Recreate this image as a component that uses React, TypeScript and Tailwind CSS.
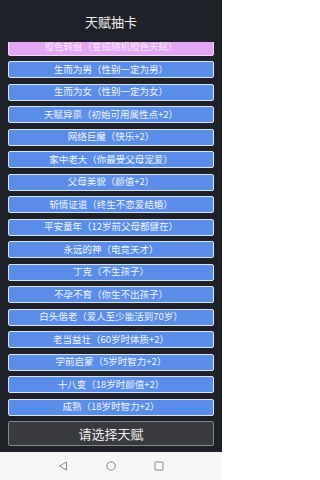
import React from "react";

const items = [
  "生而为男（性别一定为男）",
  "生而为女（性别一定为女）",
  "天赋异禀（初始可用属性点+2）",
  "网络巨魔（快乐+2）",
  "家中老大（你最受父母宠爱）",
  "父母美貌（颜值+2）",
  "斩情证道（终生不恋爱结婚）",
  "平安童年（12岁前父母都健在）",
  "永远的神（电竞天才）",
  "丁克（不生孩子）",
  "不孕不育（你生不出孩子）",
  "白头偕老（爱人至少能活到70岁）",
  "老当益壮（60岁时体质+2）",
  "学前启蒙（5岁时智力+2）",
  "十八变（18岁时颜值+2）",
  "成熟（18岁时智力+2）",
];

const font = { fontFamily: '"Noto Sans CJK SC", "Noto Sans", sans-serif' };

export default function App() {
  return (
    <div className="w-[222px] h-[480px] flex flex-col bg-[#1e2128] overflow-hidden" style={font}>
      <div className="h-[42px] shrink-0 flex items-center justify-center pt-[2px] text-[13px] text-[#f2f2f2]">
        天赋抽卡
      </div>
      <div className="h-[410px] shrink-0 overflow-hidden px-[8px]">
        <div className="flex flex-col gap-[5.5px] mt-[-3.5px]">
          <div className="h-[17px] rounded-[2px] border border-[#f0d8f8] bg-[#e4a5f4] flex items-center justify-center text-[9.5px] leading-none text-[#f6e6fb]">
            橙色转盘（变成随机橙色天赋）
          </div>
          {items.map((t) => (
            <div
              key={t}
              className="h-[17px] rounded-[2px] border border-[#d6e3f8] bg-[#5b8ee8] flex items-center justify-center text-[9.5px] leading-none text-[#eef3fc]"
            >
              {t}
            </div>
          ))}
          <div className="h-[25px] rounded-[2px] border border-[#85878c] bg-[#3a3b40] flex items-center justify-center text-[13px] leading-none text-[#ededed]">
            请选择天赋
          </div>
        </div>
      </div>
      <div className="flex-1 bg-[#f7f7f7] flex items-center justify-center gap-[38px]">
        <svg width="10" height="10" viewBox="0 0 10 10" className="mr-[0px]">
          <path d="M8.5 1 L1.5 5 L8.5 9 Z" fill="none" stroke="#8a8a8a" strokeWidth="1" strokeLinejoin="round" />
        </svg>
        <svg width="10" height="10" viewBox="0 0 10 10">
          <circle cx="5" cy="5" r="4.2" fill="none" stroke="#8a8a8a" strokeWidth="1" />
        </svg>
        <svg width="10" height="10" viewBox="0 0 10 10">
          <rect x="1" y="1" width="8" height="8" rx="0.5" fill="none" stroke="#8a8a8a" strokeWidth="1" />
        </svg>
      </div>
    </div>
  );
}
